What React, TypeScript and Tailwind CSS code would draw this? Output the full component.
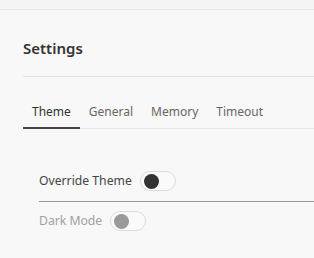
import React from "react";

function Toggle({ disabled }: { disabled?: boolean }) {
  return (
    <div className="w-[36px] h-[20px] rounded-full border border-[#dcdcdc] bg-[#fafafa] flex items-center px-[3px]">
      <div className={"w-[15px] h-[15px] rounded-full " + (disabled ? "bg-[#9a9a9a]" : "bg-[#333333]")} />
    </div>
  );
}

export default function App() {
  return (
    <div className="w-[314px] h-[258px] bg-[#f8f8f8] overflow-hidden" style={{ fontFamily: '"Noto Sans", "Open Sans", sans-serif' }}>
      <div className="h-[10px] bg-[#f3f4f6] border-b border-[#e5e7eb]" />
      <div className="pl-[23px]">
        <div className="pt-[28px] h-[67px] border-b border-[#e3e3e3]">
          <div className="text-[15px] leading-[20px] font-semibold text-[#333333]">Settings</div>
        </div>
        <div className="mt-[26px] flex border-b border-[#e6e6e6] text-[12px] leading-[18px]">
          <div className="px-[9px] pb-[6px] text-[#333333] border-b-[2px] border-[#444444] -mb-px">Theme</div>
          <div className="px-[9px] pb-[7px] text-[#666666]">General</div>
          <div className="px-[9px] pb-[7px] text-[#666666]">Memory</div>
          <div className="px-[9px] pb-[7px] text-[#666666]">Timeout</div>
        </div>
        <div className="pl-[16px] mt-[42px]">
          <div className="flex items-center gap-[8px] h-[20px] text-[12.2px] text-[#444444]">
            <span>Override Theme</span>
            <Toggle />
          </div>
          <div className="mt-[10px] border-t border-[#999999]" />
          <div className="mt-[9px] flex items-center gap-[8px] h-[20px] text-[12.2px] text-[#a0a0a0]">
            <span>Dark Mode</span>
            <Toggle disabled />
          </div>
        </div>
      </div>
    </div>
  );
}
